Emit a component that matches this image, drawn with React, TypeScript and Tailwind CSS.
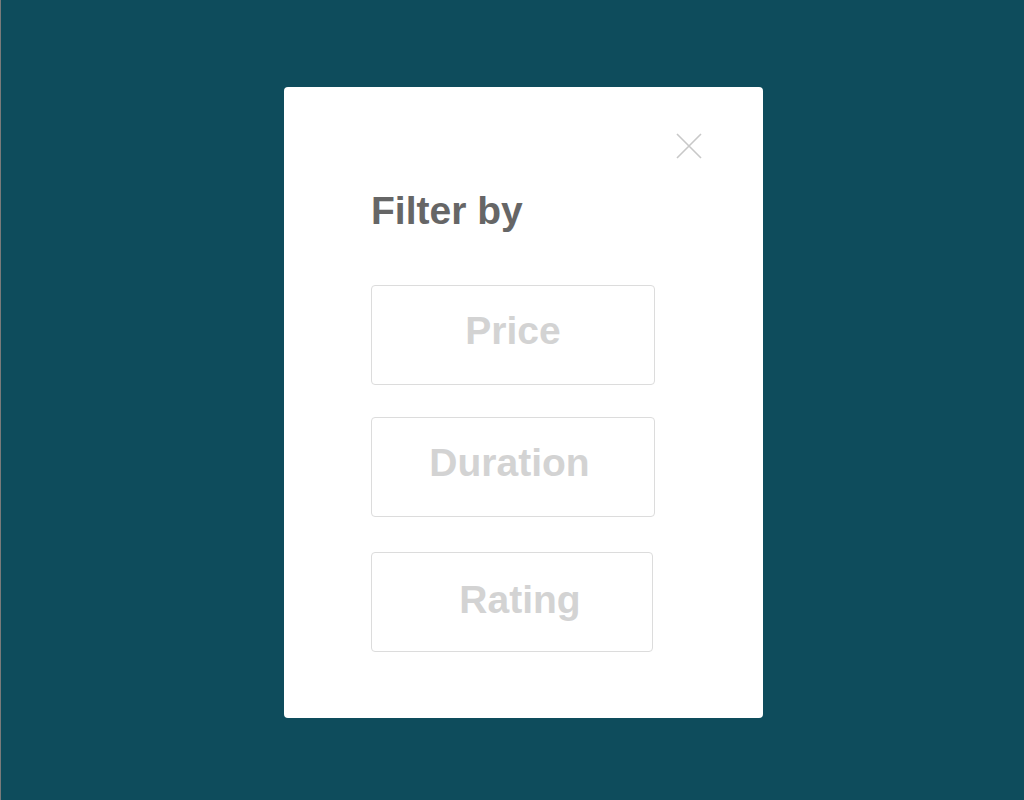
export default function App() {
  const font = { fontFamily: '"Liberation Sans", Arial, sans-serif' };
  return (
    <div className="h-[800px] w-[1024px] bg-[#0e4c5c] border-l border-[#7a7a7a] pl-[283px] pt-[87px]" style={font}>
      <div className="w-[479px] h-[631px] bg-white rounded-[4px] flex flex-col">
        <div className="flex justify-end pt-[46px] pr-[61px]">
          <button className="w-[26px] h-[26px] text-[#c8c8c8]" aria-label="Close">
            <svg viewBox="0 0 26 26" width="26" height="26" fill="none" stroke="currentColor" strokeWidth="1.6">
              <path d="M1 1L25 25M25 1L1 25" />
            </svg>
          </button>
        </div>
        <div className="pl-[87px]">
          <h2 className="text-[39px] leading-none font-bold text-[#666666] mt-[32px]">Filter by</h2>
          <div className="mt-[55px] flex flex-col">
            <button className="w-[284px] h-[100px] border border-[#dcdcdc] rounded-[4px] text-[39px] font-bold text-[#d3d3d3] pb-[8px]">
              Price
            </button>
            <button className="w-[284px] h-[100px] border border-[#dcdcdc] rounded-[4px] text-[39px] font-bold text-[#d3d3d3] pb-[8px] pr-[7px] mt-[32px]">
              Duration
            </button>
            <button className="w-[282px] h-[100px] border border-[#dcdcdc] rounded-[4px] text-[39px] font-bold text-[#d3d3d3] pl-[16px] pb-[4px] mt-[35px]">
              Rating
            </button>
          </div>
        </div>
      </div>
    </div>
  );
}
